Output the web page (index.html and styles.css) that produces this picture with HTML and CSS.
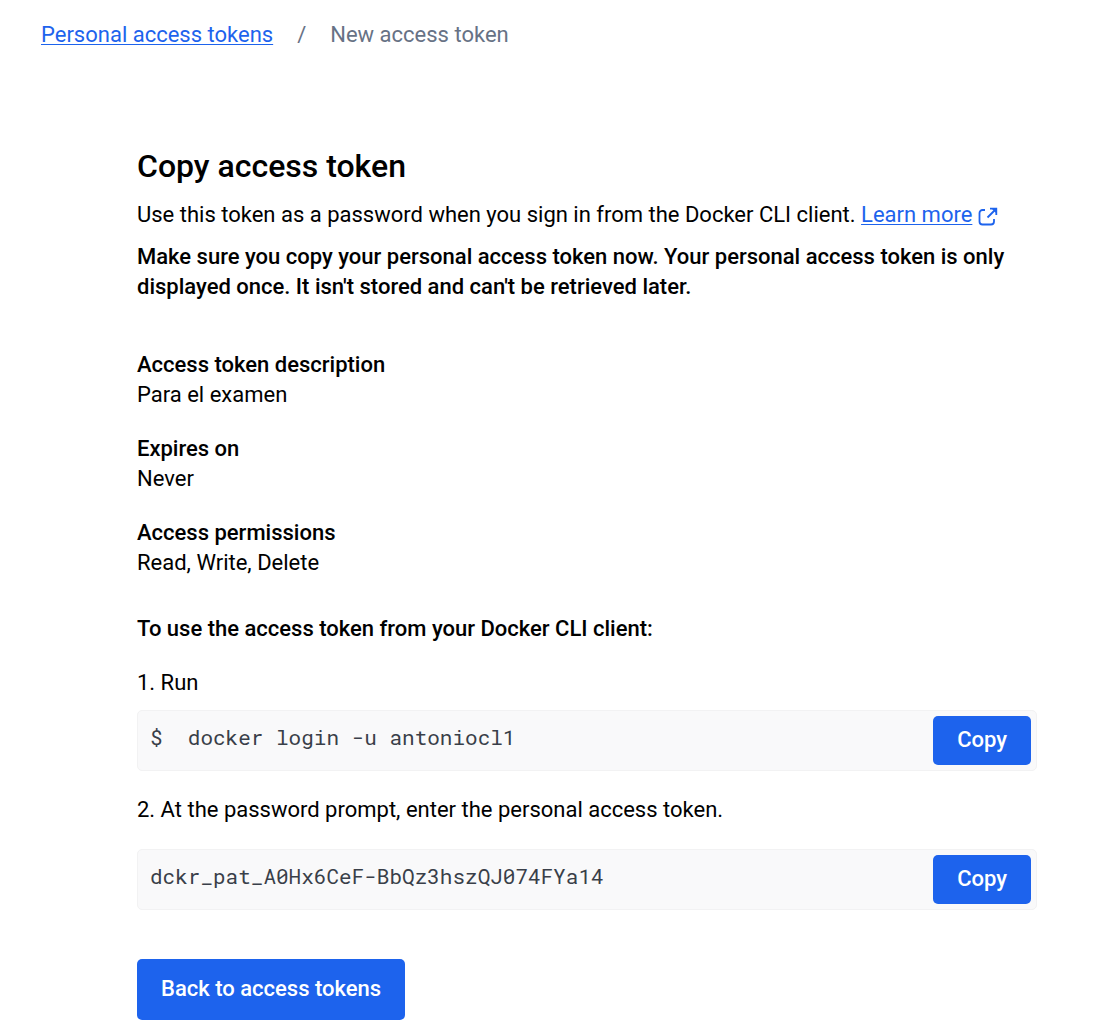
FILE: index.html
```html
<!DOCTYPE html>
<html lang="en">
<head>
<meta charset="utf-8">
<meta name="viewport" content="width=device-width, initial-scale=1">
<title>New access token</title>
<link rel="stylesheet" href="styles.css">
</head>
<body>
<nav class="breadcrumb" aria-label="Breadcrumb">
  <a class="link" href="#tokens">Personal access tokens</a>
  <span class="separator">/</span>
  <span>New access token</span>
</nav>
<main class="content">
  <h1 class="title">Copy access token</h1>
  <p class="intro">Use this token as a password when you sign in from the Docker CLI client. <a class="link" href="#learn">Learn more</a><svg class="external" viewBox="0 0 20 20" fill="none" stroke="currentColor" stroke-width="1.800" aria-hidden="true"><path d="M7 4H4.500a3 3 0 0 0-3 3v8.500a3 3 0 0 0 3 3h8.500a3 3 0 0 0 3-3V13M12 2.700h6.300V9M17.500 3.500L9.500 11.500"/><path d="M14 3h4v4z" fill="currentColor" stroke="none"/></svg></p>
  <p class="warning">Make sure you copy your personal access token now. Your personal access token is only displayed once. It isn't stored and can't be retrieved later.</p>
  <dl class="details">
    <div><dt>Access token description</dt><dd>Para el examen</dd></div>
    <div><dt>Expires on</dt><dd>Never</dd></div>
    <div><dt>Access permissions</dt><dd>Read, Write, Delete</dd></div>
  </dl>
  <h2 class="subtitle">To use the access token from your Docker CLI client:</h2>
  <p class="step step-run">1. Run</p>
  <div class="snippet"><code class="code">$  docker login -u antoniocl1</code><button class="button copy" type="button">Copy</button></div>
  <p class="step step-prompt">2. At the password prompt, enter the personal access token.</p>
  <div class="snippet"><code class="code">dckr_pat_A0Hx6CeF-BbQz3hszQJ074FYa14</code><button class="button copy" type="button">Copy</button></div>
  <button class="button back" type="button">Back to access tokens</button>
</main>
</body>
</html>
```
FILE: styles.css
```css
* { box-sizing: border-box; }
body { margin: 0; background: #fff; color: #000; font: 400 22px/30px Roboto, sans-serif; }
h1, h2, p, dl, dd { margin: 0; }
.link { color: #1d63ed; text-decoration: underline; text-underline-offset: 2px; text-decoration-thickness: 1px; }
.breadcrumb { display: flex; gap: 24px; padding: 20px 41px 0; color: #677285; }
.content { padding: 96px 63px 6px 137px; }
.title { font-size: 32px; line-height: 40px; font-weight: 500; margin-bottom: 14px; }
.intro { margin-bottom: 12px; }
.external { width: 20px; height: 20px; margin-left: 6px; color: #1d63ed; vertical-align: -4px; }
.warning { font-weight: 500; }
.details { display: grid; gap: 24px; margin: 48px 0 36px; }
dt { font-weight: 500; }
.subtitle { font-size: 22px; line-height: 30px; font-weight: 500; }
.step { margin-top: 24px; }
.step-run { margin-bottom: 12px; }
.step-prompt { margin-bottom: 24px; }
.snippet { display: flex; align-items: flex-start; justify-content: space-between; padding: 5px; border: 1px solid #f2f2f3; border-radius: 5px; background: #f9f9fa; }
.code { font: 400 21px/30px "Roboto Mono", "Liberation Mono", monospace; color: #393f49; padding: 6px 0 0 7px; white-space: pre; }
.button { border: 0; border-radius: 5px; background: #1d63ed; color: #fff; font: 500 22px/30px Roboto, sans-serif; padding: 9px 24px 10px; }
.back { padding: 15px 24px 16px; margin-top: 49px; }
```
